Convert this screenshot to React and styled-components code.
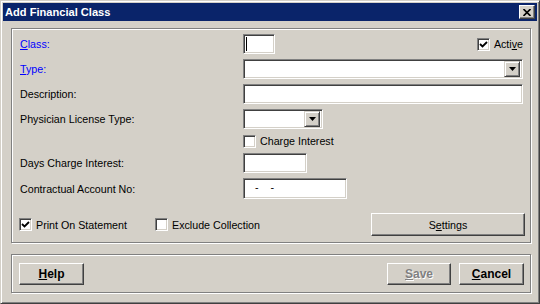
import React from "react";
import styled, { createGlobalStyle } from "styled-components";

const GlobalStyle = createGlobalStyle`
  html, body {
    margin: 0;
    padding: 0;
    background: #d4d0c8;
  }
  * {
    box-sizing: border-box;
  }
`;

const FONT = `"Liberation Sans", Arial, sans-serif`;

const Window = styled.div`
  width: 540px;
  height: 304px;
  padding: 2px;
  display: flex;
  flex-direction: column;
  background: #d4d0c8;
  border: 1px solid;
  border-color: #d4d0c8 #404040 #404040 #d4d0c8;
  box-shadow: inset 1px 1px #fff, inset -1px -1px #808080;
  font-family: ${FONT};
  font-size: 10.7px;
  color: #000;
`;

const TitleBar = styled.div`
  height: 18px;
  display: flex;
  align-items: center;
  justify-content: space-between;
  padding: 0 2px;
  background: #0a246a;
  color: #fff;
`;

const Title = styled.span`
  font-weight: bold;
  font-size: 11.1px;
`;

const CloseButton = styled.div`
  width: 16px;
  height: 14px;
  display: flex;
  align-items: center;
  justify-content: center;
  background: #d4d0c8;
  border: 1px solid;
  border-color: #fff #404040 #404040 #fff;
  box-shadow: inset -1px -1px #808080;
`;

const Body = styled.div`
  padding: 7px 6px 0 8px;
  display: flex;
  flex-direction: column;
`;

const GroupBox = styled.div`
  border: 1px solid #808080;
  box-shadow: 1px 1px 0 #fff, inset 1px 1px 0 #fff;
  padding: ${(p) => p.$pad};
  margin-top: ${(p) => p.$top || 0}px;
  display: flex;
  flex-direction: column;
`;

const Row = styled.div`
  display: grid;
  grid-template-columns: 224px 280px;
  align-items: center;
  height: ${(p) => p.$h || 20}px;
  margin-top: ${(p) => p.$gap || 0}px;
`;

const Label = styled.span`
  padding-left: 1px;
  color: ${(p) => (p.$link ? "#0000ff" : "#000")};
  white-space: nowrap;
`;

const Key = styled.u`
  text-decoration: underline;
  text-underline-offset: 1px;
`;

const Cell = styled.div`
  display: flex;
  align-items: center;
  justify-content: space-between;
  height: 100%;
`;

const Field = styled.div`
  position: relative;
  width: ${(p) => p.$w}px;
  height: ${(p) => p.$h || 20}px;
  background: #fff;
  border: 1px solid;
  border-color: #808080 #fff #fff #808080;
  box-shadow: inset 1px 1px #404040, inset -1px -1px #d4d0c8;
  display: flex;
  align-items: center;
  justify-content: flex-end;
  padding: 2px;
`;

const Caret = styled.span`
  position: absolute;
  left: 2px;
  top: 2px;
  width: 1px;
  height: 14px;
  background: #000;
`;

const Mask = styled.span`
  position: absolute;
  left: 11px;
  top: 2px;
  white-space: pre;
`;

const DropButton = styled.div`
  width: 16px;
  height: 16px;
  display: flex;
  align-items: center;
  justify-content: center;
  background: #d4d0c8;
  border: 1px solid;
  border-color: #d4d0c8 #404040 #404040 #d4d0c8;
  box-shadow: inset 1px 1px #fff, inset -1px -1px #808080;
`;

const CheckItem = styled.label`
  display: flex;
  align-items: center;
  gap: 4px;
  width: ${(p) => (p.$w ? `${p.$w}px` : "auto")};
  white-space: nowrap;
`;

const CheckBox = styled.span`
  width: 13px;
  height: 13px;
  flex: none;
  background: #fff;
  border: 1px solid;
  border-color: #808080 #fff #fff #808080;
  box-shadow: inset 1px 1px #404040, inset -1px -1px #d4d0c8;
  display: flex;
  align-items: center;
  justify-content: center;
`;

const BottomRow = styled.div`
  display: flex;
  align-items: center;
  height: 23px;
  margin-top: 14px;
`;

const Button = styled.div`
  width: ${(p) => p.$w}px;
  height: ${(p) => p.$h || 22}px;
  margin-left: ${(p) => (p.$push ? "auto" : `${p.$ml || 0}px`)};
  display: flex;
  align-items: center;
  justify-content: center;
  background: #d4d0c8;
  border: 1px solid;
  border-color: #fff #404040 #404040 #fff;
  box-shadow: inset -1px -1px #808080;
  font-weight: ${(p) => (p.$bold ? "bold" : "normal")};
  font-size: ${(p) => (p.$bold ? "12px" : "10.7px")};
  color: ${(p) => (p.$disabled ? "#808080" : "#000")};
  text-shadow: ${(p) => (p.$disabled ? "1px 1px 0 #fff" : "none")};
`;

const ButtonRow = styled.div`
  display: flex;
  align-items: center;
`;

const Check = () => (
  <svg width="9" height="9" viewBox="0 0 9 9">
    <path d="M1 4 L3.5 6.5 L8 2" fill="none" stroke="#000" strokeWidth="1.8" />
  </svg>
);

const Arrow = () => (
  <svg width="7" height="4" viewBox="0 0 7 4">
    <polygon points="0,0 7,0 3.5,4" fill="#000" />
  </svg>
);

const CloseIcon = () => (
  <svg width="8" height="7" viewBox="0 0 8 7">
    <path d="M0.5 0 L7.5 7 M7.5 0 L0.5 7" stroke="#000" strokeWidth="1.6" />
  </svg>
);

const Checkable = ({ checked, width, children }) => (
  <CheckItem $w={width}>
    <CheckBox>{checked && <Check />}</CheckBox>
    <span>{children}</span>
  </CheckItem>
);

const Combo = ({ width }) => (
  <Field $w={width}>
    <DropButton>
      <Arrow />
    </DropButton>
  </Field>
);

const App = () => {
  return (
    <>
      <GlobalStyle />
      <Window>
        <TitleBar>
          <Title>Add Financial Class</Title>
          <CloseButton>
            <CloseIcon />
          </CloseButton>
        </TitleBar>
        <Body>
          <GroupBox $pad="5px 5px 6px 7px">
            <Row>
              <Label $link>
                <Key>C</Key>lass:
              </Label>
              <Cell>
                <Field $w={32}>
                  <Caret />
                </Field>
                <Checkable checked>
                  Acti<Key>v</Key>e
                </Checkable>
              </Cell>
            </Row>
            <Row $gap={5}>
              <Label $link>
                <Key>T</Key>ype:
              </Label>
              <Combo width={280} />
            </Row>
            <Row $gap={5}>
              <Label>Description:</Label>
              <Field $w={280} />
            </Row>
            <Row $gap={5}>
              <Label>Physician License Type:</Label>
              <Combo width={80} />
            </Row>
            <Row $gap={3} $h={18}>
              <span />
              <Checkable>Charge Interest</Checkable>
            </Row>
            <Row $gap={3}>
              <Label>Days Charge Interest:</Label>
              <Field $w={64} />
            </Row>
            <Row $gap={5} $h={21}>
              <Label>Contractual Account No:</Label>
              <Field $w={104} $h={21}>
                <Mask>-    -</Mask>
              </Field>
            </Row>
            <BottomRow>
              <Checkable checked width={136}>
                Print On Statement
              </Checkable>
              <Checkable>Exclude Collection</Checkable>
              <Button $w={154} $h={23} $push>
                <span>
                  S<Key>e</Key>ttings
                </span>
              </Button>
            </BottomRow>
          </GroupBox>
          <GroupBox $pad="8px 6px 7px 7px" $top={11}>
            <ButtonRow>
              <Button $w={65} $bold>
                <span>
                  <Key>H</Key>elp
                </span>
              </Button>
              <Button $w={64} $bold $disabled $push>
                <span>
                  <Key>S</Key>ave
                </span>
              </Button>
              <Button $w={65} $bold $ml={8}>
                <span>
                  <Key>C</Key>ancel
                </span>
              </Button>
            </ButtonRow>
          </GroupBox>
        </Body>
      </Window>
    </>
  );
};

export default App;
